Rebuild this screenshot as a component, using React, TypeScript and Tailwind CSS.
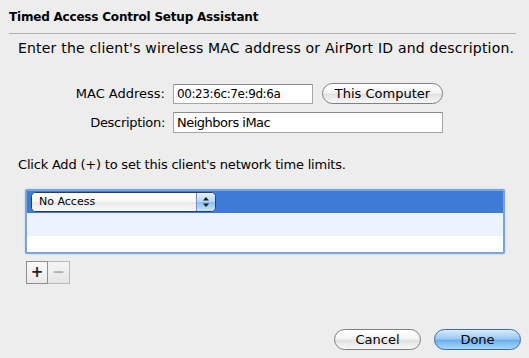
const FONT = "font-['Lucida_Grande','DejaVu_Sans',sans-serif]"

function AquaButton({ label, primary, className }: { label: string; primary?: boolean; className: string }) {
  return (
    <button
      type="button"
      className={
        'h-[21px] rounded-full border text-[13px] leading-none text-black ' +
        (primary
          ? 'border-[#3d6aa8] bg-[linear-gradient(to_bottom,#d9ebfb_0%,#9ccaf3_45%,#6bb0ef_55%,#a9d8fb_100%)] '
          : 'border-[#7f7f7f] bg-[linear-gradient(to_bottom,#ffffff_0%,#f4f4f4_45%,#e2e2e2_55%,#f7f7f7_100%)] ') +
        className
      }
    >
      {label}
    </button>
  )
}

function PopupArrows() {
  return (
    <svg width="8" height="12" viewBox="0 0 8 12" aria-hidden="true">
      <path d="M4 1 L7 4.5 L1 4.5 Z" fill="#1a1a1a" />
      <path d="M4 11 L7 7.5 L1 7.5 Z" fill="#1a1a1a" />
    </svg>
  )
}

export default function App() {
  return (
    <div className={'w-[529px] h-[358px] bg-[#ededed] text-[13px] text-black overflow-hidden ' + FONT}>
      <div className="pl-[9px] pt-[9px] text-[12px] tracking-[-0.2px] font-bold leading-[16px]">
        Timed Access Control Setup Assistant
      </div>
      <div className="mt-[8px] ml-[9px] w-[507px] h-px bg-[#b3b3b3]" />

      <p className="mt-[6px] pl-[18px] text-[14px] tracking-[0.2px] leading-[17px]">
        Enter the client's wireless MAC address or AirPort ID and description.
      </p>

      <div className="mt-[26px] flex items-center">
        <span className="w-[165px] text-right leading-[16px]">MAC Address:</span>
        <div className="ml-[8px] w-[140px] h-[20px] bg-white border border-[#a5a5a5] border-t-[#8c8c8c] pl-[3px] flex items-center text-[12px] tracking-[-0.4px] leading-none">
          00:23:6c:7e:9d:6a
        </div>
        <AquaButton label="This Computer" className="ml-[9px] w-[121px]" />
      </div>

      <div className="mt-[8px] flex items-center">
        <span className="w-[165px] text-right tracking-[-0.3px] leading-[16px]">Description:</span>
        <div className="ml-[8px] w-[270px] h-[21px] bg-white border border-[#a5a5a5] border-t-[#8c8c8c] pl-[3px] flex items-center tracking-[-0.5px] leading-none">
          Neighbors iMac
        </div>
      </div>

      <p className="mt-[24px] pl-[18px] tracking-[-0.2px] leading-[16px]">
        Click Add (+) to set this client's network time limits.
      </p>

      <div className="ml-[25px] mt-[16px] w-[480px] h-[65px] rounded-[2px] border-[2px] border-[#7aa4dc] bg-white flex flex-col shadow-[0_0_2px_#a9c6ec]">
        <div className="h-[22px] bg-[#3f7bd4] flex items-center pl-[4px]">
          <div className="w-[185px] h-[20px] rounded-[5px] border border-[#2e3a66] bg-white flex overflow-hidden">
            <div className="flex-1 bg-[linear-gradient(to_bottom,#ffffff_0%,#f6f6f6_50%,#e8e8e8_51%,#fafafa_100%)] pl-[7px] text-[11px] leading-[18px]">
              No Access
            </div>
            <div className="w-[19px] border-l border-[#7a8fb8] bg-[linear-gradient(to_bottom,#e5f1fc_0%,#b6d7f5_50%,#8cc0ee_51%,#c7e4fb_100%)] flex items-center justify-center">
              <PopupArrows />
            </div>
          </div>
        </div>
        <div className="h-[23px] bg-[#edf3fe]" />
        <div className="flex-1 bg-white" />
      </div>

      <div className="ml-[26px] mt-[7px] flex">
        <div className="w-[22px] h-[23px] border border-[#8e8e8e] bg-[linear-gradient(to_bottom,#fbfbfb,#e9e9e9)] flex items-center justify-center text-[15px] font-bold leading-none text-[#222]">
          +
        </div>
        <div className="w-[22px] h-[23px] border border-l-0 border-[#b9b9b9] bg-[linear-gradient(to_bottom,#f4f4f4,#e6e6e6)] flex items-center justify-center text-[15px] font-bold leading-none text-[#b0b0b0]">
          −
        </div>
      </div>

      <div className="mt-[45px] pr-[8px] flex justify-end gap-[13px]">
        <AquaButton label="Cancel" className="w-[87px]" />
        <AquaButton label="Done" primary className="w-[87px]" />
      </div>
    </div>
  )
}
